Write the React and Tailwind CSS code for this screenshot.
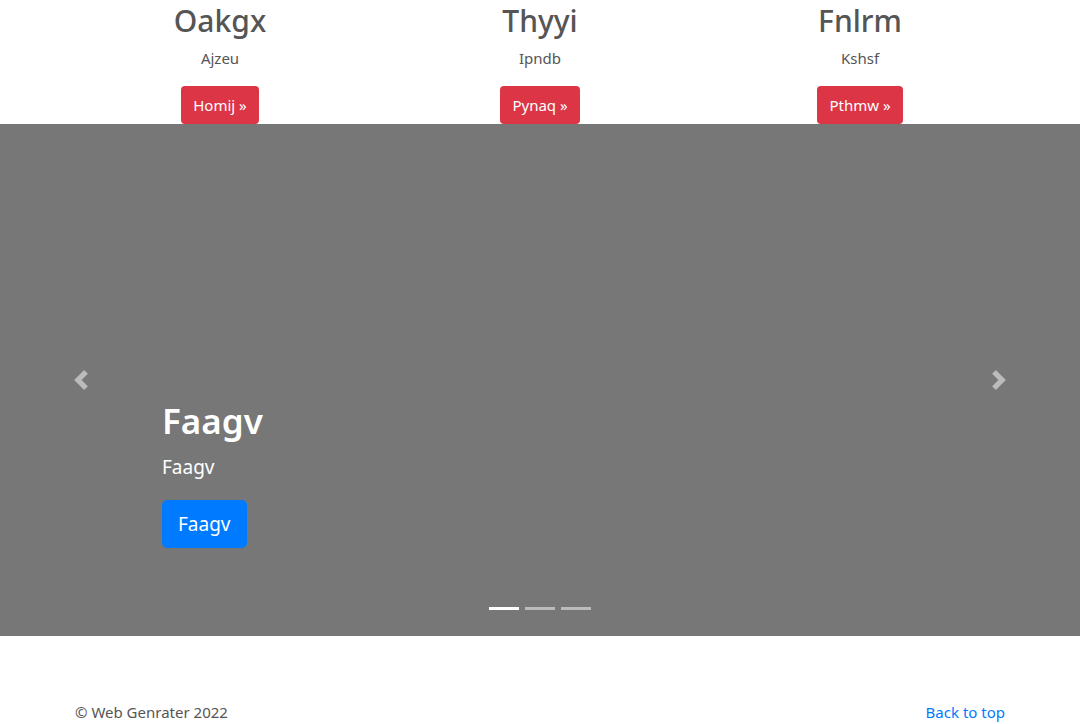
import React from 'react';

const font = { fontFamily: '"Noto Sans", "Open Sans", sans-serif' };

const columns = [
  { title: 'Oakgx', text: 'Ajzeu', cta: 'Homij' },
  { title: 'Thyyi', text: 'Ipndb', cta: 'Pynaq' },
  { title: 'Fnlrm', text: 'Kshsf', cta: 'Pthmw' },
];

function Chevron({ dir }) {
  return (
    <svg className="h-5 w-5" viewBox="0 0 8 8" fill="#fff" fillOpacity="0.5">
      {dir === 'left' ? (
        <path d="M5.25 0l-4 4 4 4 1.5-1.5L4.25 4l2.5-2.5L5.25 0z" />
      ) : (
        <path d="M2.75 0l-1.5 1.5L3.75 4l-2.5 2.5L2.75 8l4-4-4-4z" />
      )}
    </svg>
  );
}

export default function App() {
  return (
    <div className="w-[1080px] bg-white text-[#555]" style={font}>
      {/* marketing columns */}
      <div className="mx-auto grid w-[960px] grid-cols-3 pt-[2px]">
        {columns.map((c) => (
          <div key={c.title} className="flex flex-col items-center px-[15px]">
            <h2 className="mb-[6px] text-[30px] font-medium leading-[38px]">{c.title}</h2>
            <p className="mb-4 text-[15px] leading-6">{c.text}</p>
            <button className="h-[38px] rounded bg-[#dc3545] px-3 text-[15px] text-white">
              {c.cta} »
            </button>
          </div>
        ))}
      </div>

      {/* carousel */}
      <div className="relative flex h-[512px] items-center bg-[#777]">
        <div className="flex w-[162px] justify-center">
          <Chevron dir="left" />
        </div>
        <div className="flex h-full flex-1 flex-col justify-end pb-[88px] text-white">
          <h1 className="mb-2 text-[35px] font-semibold leading-[48px]">Faagv</h1>
          <p className="mb-[19px] text-[19px] leading-7">Faagv</p>
          <div>
            <button className="h-12 rounded-[5px] bg-[#007bff] px-4 text-[19px] text-white">Faagv</button>
          </div>
        </div>
        <div className="flex w-[162px] justify-center">
          <Chevron dir="right" />
        </div>
        <div className="absolute bottom-[26px] left-0 right-0 flex justify-center gap-[6px]">
          <span className="h-[3px] w-[30px] bg-white" />
          <span className="h-[3px] w-[30px] bg-white/50" />
          <span className="h-[3px] w-[30px] bg-white/50" />
        </div>
      </div>

      {/* footer */}
      <footer className="mx-auto flex w-[960px] justify-between px-[15px] pt-16 text-[15px] leading-6">
        <p>© Web Genrater 2022</p>
        <a href="#" className="text-[#007bff]">Back to top</a>
      </footer>
    </div>
  );
}
